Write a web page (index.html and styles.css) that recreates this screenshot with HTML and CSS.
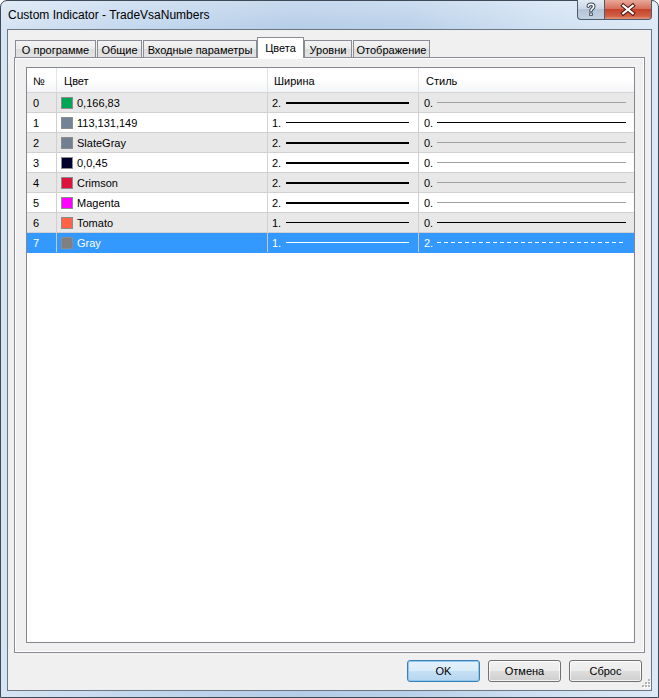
FILE: index.html
```html
<!DOCTYPE html>
<html>
<head>
<meta charset="utf-8">
<title>Custom Indicator - TradeVsaNumbers</title>
<link rel="stylesheet" href="styles.css">
</head>
<body>
<div class="window">
  <div class="titlebar">
    <span class="title">Custom Indicator - TradeVsaNumbers</span>
    <div class="caption">
      <div class="cbtn help">
        <svg width="26" height="19" viewBox="0 0 26 19">
          <path d="M10.3 6.2 C10.3 3.6 15.7 3.6 15.7 6.4 C15.7 8.6 13 8.6 13 10.8" fill="none" stroke="#3a4656" stroke-width="3.6" stroke-linecap="round"/>
          <rect x="11.2" y="12.6" width="3.6" height="3.2" fill="#3a4656"/>
          <path d="M10.3 6.2 C10.3 3.6 15.7 3.6 15.7 6.4 C15.7 8.6 13 8.6 13 10.8" fill="none" stroke="#fff" stroke-width="1.6" stroke-linecap="round"/>
          <rect x="12.2" y="13.4" width="1.6" height="1.6" fill="#fff"/>
        </svg>
      </div>
      <div class="cbtn close">
        <svg width="48" height="19" viewBox="0 0 48 19">
          <path d="M19 5.5 L29 13.5 M29 5.5 L19 13.5" stroke="#4a1a14" stroke-width="4.2" stroke-linecap="square"/>
          <path d="M19 5.5 L29 13.5 M29 5.5 L19 13.5" stroke="#fff" stroke-width="2.2" stroke-linecap="square"/>
        </svg>
      </div>
    </div>
  </div>
  <div class="client">
    <div class="tabs">
      <div class="tab t1">О программе</div>
      <div class="tab t2">Общие</div>
      <div class="tab t3">Входные параметры</div>
      <div class="tab t-active">Цвета</div>
      <div class="tab t4">Уровни</div>
      <div class="tab t5">Отображение</div>
    </div>
    <div class="panel">
      <div class="list">
        <div class="row head">
          <div class="cell c-num">№</div>
          <div class="cell c-color">Цвет</div>
          <div class="cell c-width">Ширина</div>
          <div class="cell c-style">Стиль</div>
        </div>

        <div class="row even">
          <div class="cell c-num">0</div>
          <div class="cell c-color"><span class="sw" style="background:rgb(0,166,83)"></span>0,166,83</div>
          <div class="cell c-width"><span class="lbl">2.</span><span class="ln w2"></span></div>
          <div class="cell c-style"><span class="lbl">0.</span><span class="ln gray"></span></div>
        </div>
        <div class="row odd">
          <div class="cell c-num">1</div>
          <div class="cell c-color"><span class="sw" style="background:rgb(113,131,149)"></span>113,131,149</div>
          <div class="cell c-width"><span class="lbl">1.</span><span class="ln w1"></span></div>
          <div class="cell c-style"><span class="lbl">0.</span><span class="ln w1"></span></div>
        </div>
        <div class="row even">
          <div class="cell c-num">2</div>
          <div class="cell c-color"><span class="sw" style="background:#708090"></span>SlateGray</div>
          <div class="cell c-width"><span class="lbl">2.</span><span class="ln w2"></span></div>
          <div class="cell c-style"><span class="lbl">0.</span><span class="ln gray"></span></div>
        </div>
        <div class="row odd">
          <div class="cell c-num">3</div>
          <div class="cell c-color"><span class="sw" style="background:rgb(0,0,45)"></span>0,0,45</div>
          <div class="cell c-width"><span class="lbl">2.</span><span class="ln w2"></span></div>
          <div class="cell c-style"><span class="lbl">0.</span><span class="ln gray"></span></div>
        </div>
        <div class="row even">
          <div class="cell c-num">4</div>
          <div class="cell c-color"><span class="sw" style="background:#dc143c"></span>Crimson</div>
          <div class="cell c-width"><span class="lbl">2.</span><span class="ln w2"></span></div>
          <div class="cell c-style"><span class="lbl">0.</span><span class="ln gray"></span></div>
        </div>
        <div class="row odd">
          <div class="cell c-num">5</div>
          <div class="cell c-color"><span class="sw" style="background:#ff00ff"></span>Magenta</div>
          <div class="cell c-width"><span class="lbl">2.</span><span class="ln w2"></span></div>
          <div class="cell c-style"><span class="lbl">0.</span><span class="ln gray"></span></div>
        </div>
        <div class="row even">
          <div class="cell c-num">6</div>
          <div class="cell c-color"><span class="sw" style="background:#ff6347"></span>Tomato</div>
          <div class="cell c-width"><span class="lbl">1.</span><span class="ln w1"></span></div>
          <div class="cell c-style"><span class="lbl">0.</span><span class="ln w1"></span></div>
        </div>
        <div class="row selected">
          <div class="cell c-num">7</div>
          <div class="cell c-color"><span class="sw" style="background:#808080"></span>Gray</div>
          <div class="cell c-width"><span class="lbl">1.</span><span class="ln w1"></span></div>
          <div class="cell c-style"><span class="lbl">2.</span><span class="ln dash"></span></div>
        </div>
      </div>
    </div>
    <div class="buttons">
      <div class="btn default">OK</div>
      <div class="btn">Отмена</div>
      <div class="btn">Сброс</div>
    </div>
    <svg class="grip" width="12" height="12" viewBox="0 0 12 12">
      <g fill="#fff">
        <rect x="10" y="2" width="2" height="2"/>
        <rect x="10" y="5" width="2" height="2"/><rect x="7" y="5" width="2" height="2"/>
        <rect x="10" y="8" width="2" height="2"/><rect x="7" y="8" width="2" height="2"/><rect x="4" y="8" width="2" height="2"/>
      </g>
      <g fill="#b4b4b4">
        <rect x="9" y="1" width="2" height="2"/>
        <rect x="9" y="4" width="2" height="2"/><rect x="6" y="4" width="2" height="2"/>
        <rect x="9" y="7" width="2" height="2"/><rect x="6" y="7" width="2" height="2"/><rect x="3" y="7" width="2" height="2"/>
      </g>
    </svg>
  </div>
</div>
</body>
</html>
```

FILE: styles.css
```css
* { box-sizing: border-box; }
html, body { margin: 0; padding: 0; }
body {
  width: 659px;
  height: 698px;
  overflow: hidden;
  background: #ffffff;
  font-family: "Liberation Sans", Arial, sans-serif;
  font-size: 11px;
  color: #000;
}

.window {
  width: 659px;
  height: 698px;
  border: 1px solid #3f4a59;
  border-radius: 7px 7px 0 0;
  background:
    linear-gradient(to bottom, rgba(255,255,255,0.25), rgba(255,255,255,0) 28px),
    linear-gradient(to right, #d6e4f3 0%, #c4d8ee 20%, #b6cde8 45%, #bad1ea 62%, #cfe0f2 82%, #dce9f6 100%);
  display: flex;
  flex-direction: column;
}

.titlebar {
  height: 28px;
  flex: none;
  display: flex;
  align-items: flex-start;
}
.title {
  font-family: "Liberation Sans", Arial, sans-serif;
  font-size: 12px;
  line-height: 28px;
  padding-left: 7px;
  color: #000;
}
.caption {
  margin-left: auto;
  margin-right: 6px;
  margin-top: -1px;
  display: flex;
}
.cbtn {
  height: 20px;
  border: 1px solid #4e5b6b;
  border-top: none;
  display: flex;
}
.cbtn svg { display: block; }
.cbtn.help {
  width: 27px;
  border-right: none;
  border-radius: 0 0 0 4px;
  background: linear-gradient(to bottom, #e2ebf4 0%, #cbd8e6 45%, #b4c4d6 50%, #c3d2e2 100%);
}
.cbtn.close {
  width: 48px;
  border-radius: 0 0 4px 0;
  background: linear-gradient(to bottom, #e9a99a 0%, #d8705d 45%, #c7432c 50%, #d25f44 85%, #e39a7d 100%);
}

.client {
  flex: 1;
  margin: 0 6px 6px 6px;
  border: 1px solid #6a7686;
  background: #f0f0f0;
  display: flex;
  flex-direction: column;
  padding: 7px 6px 0 6px;
  position: relative;
}

.tabs {
  display: flex;
  align-items: flex-end;
  height: 20px;
  padding-left: 1px;
  flex: none;
}
.tab {
  height: 17px;
  border: 1px solid #898c95;
  border-bottom: none;
  background: linear-gradient(to bottom, #f3f3f3 0%, #ebebeb 50%, #dddddd 51%, #e3e3e3 100%);
  display: flex;
  align-items: center;
  justify-content: center;
  white-space: nowrap;
  padding-top: 1px;
}
.t1 { width: 81px; }
.t2 { width: 45px; margin-left: 1px; }
.t3 { width: 114px; margin-left: 1px; }
.t-active {
  width: 47px;
  height: 21px;
  margin-bottom: -1px;
  background: #ffffff;
  position: relative;
  z-index: 1;
  padding-top: 0;
  padding-bottom: 1px;
}
.t4 { width: 48px; }
.t5 { width: 77px; margin-left: 1px; }

.panel {
  height: 596px;
  flex: none;
  border: 1px solid #898c95;
  box-shadow: inset 0 0 0 1px #ffffff;
  background: #f0f0f0;
  padding: 9px 9px 9px 11px;
  display: flex;
}

.list {
  flex: 1;
  border: 1px solid #828790;
  background: #ffffff;
}

.row {
  display: grid;
  grid-template-columns: 30px 211px 151px 215px;
  height: 20px;
  border-bottom: 1px solid #d0d0d0;
}
.row.even { background: #e8e8e8; }
.row.odd { background: #ffffff; }
.row.selected { background: #3399ff; color: #ffffff; border-bottom-color: #3399ff; }

.cell {
  display: flex;
  align-items: center;
  border-right: 1px solid #d0d0d0;
  white-space: nowrap;
  overflow: hidden;
}
.cell.c-style { border-right: none; }
.row.selected .cell { border-right-color: #c8c8c8; }
.row.selected .cell.c-style { border-right: none; }

.c-num { padding-left: 6px; }
.c-color { padding-left: 4px; }
.c-width { padding-left: 4px; padding-right: 9px; }
.c-style { padding-left: 5px; padding-right: 8px; }

.row.head {
  height: 25px;
  background: linear-gradient(to bottom, #ffffff 0%, #ffffff 45%, #f4f5f7 100%);
  border-bottom: 1px solid #d5d5d5;
}
.row.head .cell {
  border-right-color: #e3e4e6;
  padding-top: 2px;
}
.row.head .c-color { padding-left: 7px; }
.row.head .c-width { padding-left: 6px; }
.row.head .c-style { padding-left: 7px; }

.sw {
  width: 12px;
  height: 12px;
  border: 1px solid #8c8c8c;
  margin-right: 4px;
  flex: none;
}
.c-width .lbl { width: 14px; flex: none; }
.c-style .lbl { width: 13px; flex: none; }
.ln { flex: 1; height: 1px; background: #000; }
.ln.w2 { height: 2px; }
.ln.gray { background: #a0a0a0; }
.row.selected .ln { background: #ffffff; }
.row.selected .ln.dash {
  background: repeating-linear-gradient(to right, #ffffff 0 4px, transparent 4px 7px);
}

.buttons {
  margin-top: 7px;
  display: flex;
  justify-content: flex-end;
  gap: 8px;
  padding-right: 3px;
  flex: none;
}
.btn {
  width: 73px;
  height: 22px;
  border: 1px solid #707070;
  border-radius: 3px;
  background: linear-gradient(to bottom, #f2f2f2 0%, #ebebeb 48%, #dddddd 52%, #cfcfcf 100%);
  box-shadow: inset 0 0 0 1px rgba(255,255,255,0.75);
  display: flex;
  align-items: center;
  justify-content: center;
  font-size: 11px;
}
.btn.default {
  border-color: #3c7fb1;
  background: linear-gradient(to bottom, #e5f1fb 0%, #d9ebf9 48%, #c4e0f5 52%, #b5d6ef 100%);
  box-shadow: inset 0 0 0 1px #8fc8ef;
}

.grip {
  position: absolute;
  right: 0;
  bottom: 0;
}
```
